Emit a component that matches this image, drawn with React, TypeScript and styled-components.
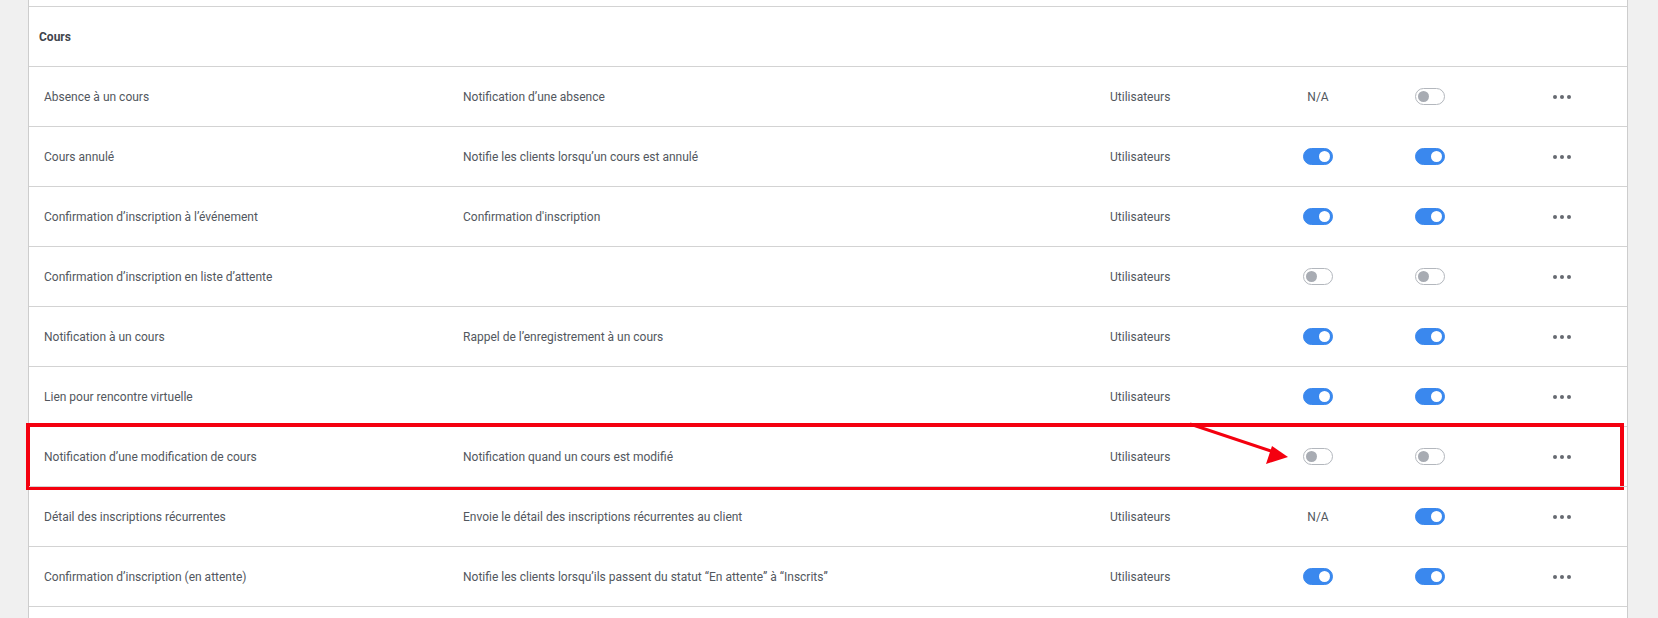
import React from "react";
import styled, { createGlobalStyle } from "styled-components";

const Global = createGlobalStyle`
  html, body { margin: 0; padding: 0; background: #f0f0f0; }
  body { font-family: Roboto, "Liberation Sans", Arial, sans-serif; -webkit-font-smoothing: antialiased; }
`;

const Page = styled.div`
  width: 1658px;
  height: 618px;
  overflow: hidden;
  background: #f0f0f0;
`;

const Panel = styled.div`
  margin-left: 28px;
  width: 1600px;
  box-sizing: border-box;
  background: #ffffff;
  border-left: 1px solid #cdcdcd;
  border-right: 1px solid #cdcdcd;
  min-height: 618px;
`;

const Filler = styled.div`
  height: 6px;
`;

const SectionRow = styled.div`
  height: 60px;
  box-sizing: border-box;
  border-top: 1px solid #d3d3d3;
  display: flex;
  align-items: center;
  padding-left: 10px;
  font-size: 12px;
  font-weight: 700;
  color: #3f444b;
`;

const Row = styled.div`
  position: relative;
  height: 60px;
  box-sizing: border-box;
  border-top: 1px solid #d3d3d3;
  display: grid;
  grid-template-columns: 419px 647px 193px 112px 138px 1fr;
  align-items: center;
  padding-left: 15px;
  font-size: 12px;
  color: #52575e;
`;

const Cell = styled.div`
  white-space: nowrap;
`;

const Centered = styled.div`
  width: 30px;
  display: flex;
  justify-content: center;
  white-space: nowrap;
`;

const Toggle = styled.div<{ $on: boolean }>`
  width: 30px;
  height: 17px;
  box-sizing: border-box;
  border-radius: 9px;
  background: ${(p) => (p.$on ? "#3a88ee" : "#ffffff")};
  border: 1px solid ${(p) => (p.$on ? "#3a88ee" : "#b3b7bd")};
  display: flex;
  align-items: center;
  justify-content: ${(p) => (p.$on ? "flex-end" : "flex-start")};
  padding: 0 2px;
  &::after {
    content: "";
    width: 11px;
    height: 11px;
    border-radius: 50%;
    background: ${(p) => (p.$on ? "#ffffff" : "#a8acb3")};
  }
`;

const Dots = styled.div`
  display: flex;
  gap: 3px;
  span {
    width: 4px;
    height: 4px;
    border-radius: 50%;
    background: #666a71;
  }
`;

const Highlight = styled.div`
  position: absolute;
  left: -3px;
  right: 3px;
  top: -4px;
  bottom: -4px;
  border: 4px solid #f4000f;
  pointer-events: none;
`;

const Arrow = styled.svg`
  position: absolute;
  left: 1155px;
  top: -10px;
  overflow: visible;
  pointer-events: none;
`;

type V = boolean | "na";
interface Item {
  name: string;
  desc: string;
  a: V;
  b: V;
  hl?: boolean;
}

const items: Item[] = [
  { name: "Absence à un cours", desc: "Notification d’une absence", a: "na", b: false },
  { name: "Cours annulé", desc: "Notifie les clients lorsqu’un cours est annulé", a: true, b: true },
  { name: "Confirmation d’inscription à l’événement", desc: "Confirmation d'inscription", a: true, b: true },
  { name: "Confirmation d’inscription en liste d’attente", desc: "", a: false, b: false },
  { name: "Notification à un cours", desc: "Rappel de l’enregistrement à un cours", a: true, b: true },
  { name: "Lien pour rencontre virtuelle", desc: "", a: true, b: true },
  { name: "Notification d’une modification de cours", desc: "Notification quand un cours est modifié", a: false, b: false, hl: true },
  { name: "Détail des inscriptions récurrentes", desc: "Envoie le détail des inscriptions récurrentes au client", a: "na", b: true },
  { name: "Confirmation d’inscription (en attente)", desc: "Notifie les clients lorsqu’ils passent du statut “En attente” à “Inscrits”", a: true, b: true },
];

const Value = ({ v }: { v: V }) =>
  v === "na" ? <Centered>N/A</Centered> : <Toggle $on={v} />;

export default function App() {
  return (
    <Page>
      <Global />
      <Panel>
        <Filler />
        <SectionRow>Cours</SectionRow>
        {items.map((it) => (
          <Row key={it.name}>
            <Cell>{it.name}</Cell>
            <Cell>{it.desc}</Cell>
            <Cell>Utilisateurs</Cell>
            <Value v={it.a} />
            <Value v={it.b} />
            <Dots>
              <span />
              <span />
              <span />
            </Dots>
            {it.hl && (
              <>
                <Highlight />
                <Arrow width="140" height="50" viewBox="0 0 140 50">
                  <line x1="6" y1="7" x2="90" y2="35" stroke="#f4000f" strokeWidth="3" />
                  <polygon points="104,40 82,47 88,29" fill="#f4000f" />
                </Arrow>
              </>
            )}
          </Row>
        ))}
        <Row />
      </Panel>
    </Page>
  );
}
